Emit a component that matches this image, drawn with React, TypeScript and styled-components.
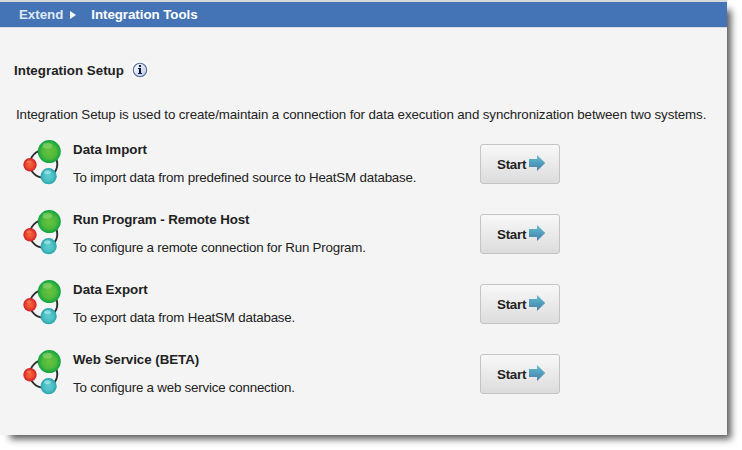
import React from "react";
import styled, { createGlobalStyle } from "styled-components";

const GlobalStyle = createGlobalStyle`
  body { margin: 0; background: #fff; font-family: "Liberation Sans", Arial, sans-serif; font-size: 13.33px; line-height: 16px; color: #222; }
  * { box-sizing: border-box; }
`;

const Stage = styled.div`
  height: 450px;
  overflow: hidden;
`;

const Panel = styled.main`
  width: 727px;
  height: 435px;
  background: #f4f4f4;
  border-top: 2px solid #d6d8da;
  box-shadow: 7px 7px 7px -3px rgba(0, 0, 0, 0.66);
`;

const Breadcrumb = styled.nav`
  display: flex;
  align-items: center;
  height: 26px;
  padding: 1px 0 0 19px;
  background: #4474b6;
  border-bottom: 1px solid #d3dae4;
  color: #fff;
  font-weight: bold;
`;

const Crumb = styled.span<{ $parent?: boolean; $spacing: number }>`
  color: ${(p) => (p.$parent ? "#dfe8f3" : "#fff")};
  letter-spacing: ${(p) => p.$spacing}px;
  white-space: nowrap;
`;

const CrumbArrow = styled.svg`
  margin: 0 15px 1px 7px;
`;

const Heading = styled.header`
  display: flex;
  align-items: center;
  height: 20px;
  margin: 32px 0 0 14px;
`;

const Title = styled.h1`
  margin: 0;
  padding-top: 2px;
  font-size: 13.33px;
  line-height: 16px;
  letter-spacing: 0.02px;
  white-space: nowrap;
`;

const InfoSvg = styled.svg`
  margin-left: 8px;
`;

const Intro = styled.p`
  margin: 27px 0 0 16px;
  letter-spacing: -0.11px;
  white-space: nowrap;
`;

const ToolList = styled.ul`
  list-style: none;
  margin: 12px 0 0;
  padding: 0;
`;

const ToolRow = styled.li`
  display: grid;
  grid-template-columns: 51px 407px 80px;
  height: 70px;
  padding-left: 22px;
`;

const ToolName = styled.h2<{ $spacing: number }>`
  margin: 7px 0 12px;
  font-size: 13.33px;
  line-height: 16px;
  letter-spacing: ${(p) => p.$spacing}px;
  white-space: nowrap;
`;

const ToolText = styled.p<{ $spacing: number }>`
  margin: 0;
  letter-spacing: ${(p) => p.$spacing}px;
  white-space: nowrap;
`;

const StartButton = styled.button`
  display: flex;
  align-items: center;
  width: 80px;
  height: 40px;
  margin-top: 9px;
  padding: 0 0 0 16px;
  border: 1px solid #c4c4c4;
  border-radius: 3px;
  background: linear-gradient(#f8f8f8, #dcdcdc);
  color: #222;
  font: bold 13.33px "Liberation Sans", Arial, sans-serif;
`;

const StartLabel = styled.span`
  width: 32px;
  text-align: left;
  letter-spacing: -0.25px;
  white-space: nowrap;
`;

const ArrowSvg = styled.svg`
  margin-bottom: 2px;
`;

const tools = [
  { name: "Data Import", nameSpacing: 0, text: "To import data from predefined source to HeatSM database.", textSpacing: -0.19 },
  { name: "Run Program - Remote Host", nameSpacing: -0.08, text: "To configure a remote connection for Run Program.", textSpacing: -0.21 },
  { name: "Data Export", nameSpacing: 0, text: "To export data from HeatSM database.", textSpacing: -0.19 },
  { name: "Web Service (BETA)", nameSpacing: -0.04, text: "To configure a web service connection.", textSpacing: -0.21 },
];

const InfoIcon = () => (
  <InfoSvg width="16" height="16" viewBox="0 0 16 16">
    <defs>
      <linearGradient id="info" x2="1" y2="1">
        <stop offset="0" stopColor="#fff" />
        <stop offset="1" stopColor="#b9c9e6" />
      </linearGradient>
    </defs>
    <rect width="16" height="16" fill="#fafafa" />
    <circle cx="8" cy="8" r="6.7" fill="url(#info)" stroke="#5b6f99" strokeWidth="1.1" />
    <path d="M7 3h2v2H7zM6 6h3v5h1v1H6v-1h1V7H6z" fill="#10153c" />
  </InfoSvg>
);

const NodesIcon = () => (
  <svg width="42" height="52" viewBox="0 0 42 52">
    <defs>
      <radialGradient id="green">
        <stop offset="0" stopColor="#68c23c" />
        <stop offset="0.6" stopColor="#4fb93d" />
        <stop offset="1" stopColor="#0ea23e" />
      </radialGradient>
      <radialGradient id="red">
        <stop offset="0" stopColor="#f4663a" />
        <stop offset="0.5" stopColor="#ec4e31" />
        <stop offset="1" stopColor="#cf1d25" />
      </radialGradient>
      <radialGradient id="teal">
        <stop offset="0" stopColor="#5fcbd0" />
        <stop offset="0.6" stopColor="#4abfc4" />
        <stop offset="1" stopColor="#29a2ab" />
      </radialGradient>
    </defs>
    <circle cx="21.6" cy="29" r="13.7" fill="none" stroke="#2d2d2d" strokeWidth="1.9" />
    <circle cx="27.3" cy="16.6" r="11.5" fill="url(#green)" />
    <ellipse cx="25.4" cy="10.7" rx="4.8" ry="3" fill="#b5e58b" opacity="0.4" />
    <circle cx="8" cy="29.7" r="6.7" fill="url(#red)" />
    <ellipse cx="7" cy="26.7" rx="2.5" ry="1.5" fill="#f8a183" opacity="0.4" />
    <circle cx="26.6" cy="41.2" r="8.1" fill="url(#teal)" />
    <ellipse cx="25.5" cy="37.2" rx="3.2" ry="2" fill="#bdeff0" opacity="0.6" />
  </svg>
);

const ArrowIcon = () => (
  <ArrowSvg width="17" height="17" viewBox="0 0 17 17">
    <defs>
      <linearGradient id="arrow" x2="0" y2="1">
        <stop offset="0" stopColor="#64bccb" />
        <stop offset="0.5" stopColor="#529fbe" />
        <stop offset="1" stopColor="#4d79a9" />
      </linearGradient>
    </defs>
    <path d="M0 4h8V0l8.2 8L8 16v-4H0z" fill="url(#arrow)" />
  </ArrowSvg>
);

export default function App() {
  return (
    <Stage>
      <GlobalStyle />
      <Panel>
        <Breadcrumb>
          <Crumb $parent $spacing={-0.03}>Extend</Crumb>
          <CrumbArrow width="6" height="8" viewBox="0 0 6 8">
            <path d="M0 0l6 4-6 4z" fill="#fff" />
          </CrumbArrow>
          <Crumb $spacing={-0.05}>Integration Tools</Crumb>
        </Breadcrumb>
        <Heading>
          <Title>Integration Setup</Title>
          <InfoIcon />
        </Heading>
        <Intro>
          Integration Setup is used to create/maintain a connection for data execution and synchronization between two systems.
        </Intro>
        <ToolList>
          {tools.map((tool) => (
            <ToolRow key={tool.name}>
              <NodesIcon />
              <div>
                <ToolName $spacing={tool.nameSpacing}>{tool.name}</ToolName>
                <ToolText $spacing={tool.textSpacing}>{tool.text}</ToolText>
              </div>
              <StartButton>
                <StartLabel>Start</StartLabel>
                <ArrowIcon />
              </StartButton>
            </ToolRow>
          ))}
        </ToolList>
      </Panel>
    </Stage>
  );
}
